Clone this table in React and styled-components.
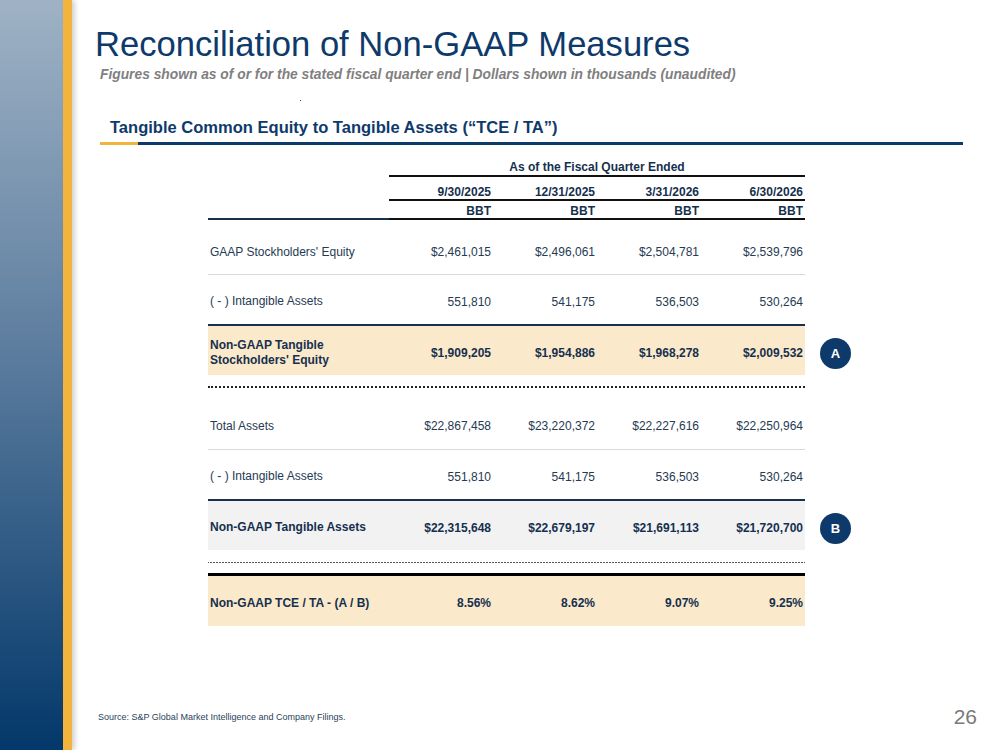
import React from 'react';
import styled, {createGlobalStyle} from 'styled-components';

const GlobalStyle = createGlobalStyle`
  html, body {
    margin: 0;
    padding: 0;
    background: #fff;
  }
  body {
    font-family: 'Liberation Sans', Arial, sans-serif;
  }
`;

const Slide = styled.div`
  display: flex;
  width: 999px;
  height: 750px;
  overflow: hidden;
  background: #fff;
`;

const Sidebar = styled.div`
  width: 63px;
  flex: none;
  background: linear-gradient(180deg, #9fb2c5 0%, #5f7fa0 45%, #03386a 100%);
`;

const Stripe = styled.div`
  width: 9px;
  flex: none;
  background: #f2b43d;
  box-shadow: 3px 0 5px rgba(0, 0, 0, 0.18);
`;

const Main = styled.main`
  flex: 1;
  display: flex;
  flex-direction: column;
  padding-left: 23px;
`;

const Title = styled.h1`
  margin: 24px 0 0;
  font-size: 34.6px;
  line-height: 40px;
  font-weight: 400;
  color: #0e3a6b;
`;

const Subtitle = styled.p`
  margin: 3px 0 0 5px;
  font-size: 13.8px;
  line-height: 16px;
  font-weight: 700;
  font-style: italic;
  color: #808080;
`;

const Speck = styled.span`
  display: block;
  width: 1px;
  height: 1px;
  margin: 17px 0 0 205px;
  background: #444;
`;

const SectionTitle = styled.h2`
  margin: 17px 0 0 15px;
  font-size: 16.55px;
  line-height: 20px;
  font-weight: 700;
  color: #0e3a6b;
`;

const Rule = styled.div`
  display: flex;
  width: 863px;
  height: 3px;
  margin: 4px 0 0 5px;
  span:first-child {
    width: 38px;
    background: #f2b43d;
  }
  span:last-child {
    flex: 1;
    background: #0e3a6b;
  }
`;

const Table = styled.section`
  margin: 12px 0 0 113px;
  display: flex;
  flex-direction: column;
  color: #263a52;
  font-size: 12px;
`;

const Line = styled.div`
  display: flex;
  align-items: center;
`;

const Grid = styled.div`
  display: grid;
  grid-template-columns: 181px repeat(4, 104px);
  width: 597px;
  height: ${p => p.$h}px;
  align-items: center;
  padding-top: ${p => p.$pt ?? 4}px;
  box-sizing: border-box;
  background: ${p => p.$bg || 'transparent'};
  border-bottom: ${p => p.$border || 'none'};
  font-weight: ${p => (p.$bold ? 700 : 400)};
  color: ${p => (p.$bold ? '#15304e' : 'inherit')};
`;

const QuarterHead = styled.div`
  grid-column: 2 / 6;
  height: 18px;
  line-height: 20px;
  text-align: center;
  font-weight: 700;
  color: #15304e;
  border-bottom: 2px solid #111;
`;

const Cell = styled.div`
  height: 100%;
  display: flex;
  align-items: ${p => p.$align || 'center'};
  justify-content: flex-end;
  padding-right: 2px;
  padding-bottom: ${p => p.$pb || 0}px;
  padding-top: ${p => p.$ptop || 0}px;
  box-sizing: border-box;
  border-bottom: ${p => p.$border || 'none'};
  font-weight: 700;
  color: #15304e;
`;

const Label = styled.div`
  padding-left: 2px;
  line-height: 15px;
`;

const Value = styled.div`
  text-align: right;
  padding-right: 2px;
`;

const Gap = styled.div`
  width: 597px;
  height: ${p => p.$h}px;
  display: flex;
  flex-direction: column;
  justify-content: ${p => p.$end ? 'flex-end' : 'center'};
`;

const Dotted = styled.div`
  width: 100%;
  border-top: 2px dotted #222;
`;

const Wavy = styled.div`
  width: 100%;
  height: 2px;
  margin-top: 12px;
  background-image:
    linear-gradient(135deg, #555 35%, transparent 35%),
    linear-gradient(225deg, #555 35%, transparent 35%);
  background-size: 3px 2px;
`;

const Heavy = styled.div`
  width: 100%;
  border-top: 3px solid #000;
`;

const Badge = styled.div`
  width: 31px;
  height: 31px;
  margin: 6px 0 0 15px;
  border-radius: 50%;
  background: #0e3a6b;
  color: #fff;
  font-weight: 700;
  font-size: 13px;
  display: flex;
  align-items: center;
  justify-content: center;
`;

const Footer = styled.footer`
  margin-top: auto;
  height: 20px;
  padding: 0 22px 23px 3px;
  display: flex;
  align-items: center;
  justify-content: space-between;
`;

const Source = styled.span`
  font-size: 9px;
  color: #2a3f5a;
`;

const PageNo = styled.span`
  font-size: 21px;
  color: #7a7a7a;
`;

const quarters = ['9/30/2025', '12/31/2025', '3/31/2026', '6/30/2026'];

const NAVY = '2px solid #17324f';
const GRAY = '1px solid #d9d9d9';

const rows = [
  {label: 'GAAP Stockholders\' Equity', values: ['$2,461,015', '$2,496,061', '$2,504,781', '$2,539,796'], h: 55, pt: 10, border: GRAY},
  {label: '( - ) Intangible Assets', values: ['551,810', '541,175', '536,503', '530,264'], h: 51, border: NAVY},
  {label: <>Non-GAAP Tangible<br />Stockholders' Equity</>, values: ['$1,909,205', '$1,954,886', '$1,968,278', '$2,009,532'], h: 49, bold: true, bg: '#fbe9cb', badge: 'A', after: 'dotted'},
  {label: 'Total Assets', values: ['$22,867,458', '$23,220,372', '$22,227,616', '$22,250,964'], h: 51, border: GRAY},
  {label: '( - ) Intangible Assets', values: ['551,810', '541,175', '536,503', '530,264'], h: 51, border: NAVY},
  {label: 'Non-GAAP Tangible Assets', values: ['$22,315,648', '$22,679,197', '$21,691,113', '$21,720,700'], h: 49, bold: true, bg: '#f2f2f2', badge: 'B', after: 'wavy'},
  {label: 'Non-GAAP TCE / TA - (A / B)', values: ['8.56%', '8.62%', '9.07%', '9.25%'], h: 50, bold: true, bg: '#fbe9cb'},
];

const App = () => (
  <Slide>
    <GlobalStyle />
    <Sidebar />
    <Stripe />
    <Main>
      <Title>Reconciliation of Non-GAAP Measures</Title>
      <Subtitle>Figures shown as of or for the stated fiscal quarter end | Dollars shown in thousands (unaudited)</Subtitle>
      <Speck />
      <SectionTitle>Tangible Common Equity to Tangible Assets (“TCE / TA”)</SectionTitle>
      <Rule><span /><span /></Rule>

      <Table>
        <Grid $h={20} $pt={0}>
          <QuarterHead>As of the Fiscal Quarter Ended</QuarterHead>
        </Grid>
        <Grid $h={24} $pt={0}>
          <div />
          {quarters.map(q => (
            <Cell key={q} $align="flex-end" $pb={0} $border="2px solid #111">{q}</Cell>
          ))}
        </Grid>
        <Grid $h={19} $pt={0}>
          <Cell $border={NAVY} />
          {quarters.map(q => (
            <Cell key={q} $ptop={2} $border="2px solid #111">BBT</Cell>
          ))}
        </Grid>

        {rows.map((r, i) => (
          <React.Fragment key={i}>
            <Line>
              <Grid $h={r.h} $pt={r.pt} $bg={r.bg} $border={r.border} $bold={r.bold}>
                <Label>{r.label}</Label>
                {r.values.map((v, j) => <Value key={j}>{v}</Value>)}
              </Grid>
              {r.badge && <Badge>{r.badge}</Badge>}
            </Line>
            {r.after === 'dotted' && <Gap $h={24}><Dotted /></Gap>}
            {r.after === 'wavy' && (
              <Gap $h={26} $end>
                <Wavy />
                <div style={{flex: 1}} />
                <Heavy />
              </Gap>
            )}
          </React.Fragment>
        ))}
      </Table>

      <Footer>
        <Source>Source: S&amp;P Global Market Intelligence and Company Filings.</Source>
        <PageNo>26</PageNo>
      </Footer>
    </Main>
  </Slide>
);

export default App;
